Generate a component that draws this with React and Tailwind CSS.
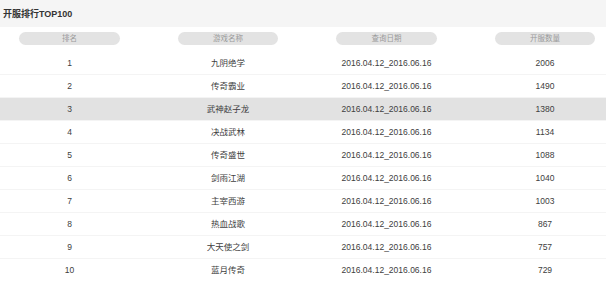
import React from "react";

const rows = [
  ["1", "九阴绝学", "2006"],
  ["2", "传奇霸业", "1490"],
  ["3", "武神赵子龙", "1380"],
  ["4", "决战武林", "1134"],
  ["5", "传奇盛世", "1088"],
  ["6", "剑雨江湖", "1040"],
  ["7", "主宰西游", "1003"],
  ["8", "热血战歌", "867"],
  ["9", "大天使之剑", "757"],
  ["10", "蓝月传奇", "729"],
];

const font = { fontFamily: '"Liberation Sans", "Noto Sans CJK SC", sans-serif' };

export default function App() {
  return (
    <div className="w-[606px] h-[281px] bg-white overflow-hidden" style={font}>
      <div className="h-[27px] bg-[#f5f5f5] flex items-center pl-[3px] pt-[2px]">
        <span className="text-[9px] font-bold text-[#333] leading-none">开服排行TOP100</span>
      </div>
      <div className="pt-[5px] pl-[19px] grid grid-cols-[101px_100px_101px_100px] gap-x-[58px]">
        {["排名", "游戏名称", "查询日期", "开服数量"].map((h) => (
          <div key={h} className="h-[13px] rounded-full bg-[#e3e3e3] flex items-center justify-center text-[7.5px] text-[#9a9a9a] leading-none">
            {h}
          </div>
        ))}
      </div>
      <div className="mt-[7px]">
        {rows.map((r, i) => (
          <div
            key={r[0]}
            className={`h-[23px] border-b border-[#f4f4f4] pl-[19px] grid grid-cols-[101px_100px_101px_100px] gap-x-[58px] items-center text-[8.5px] text-[#404040] leading-none ${i === 2 ? "bg-[#e2e2e2]" : ""}`}
          >
            <div className="text-center">{r[0]}</div>
            <div className="text-center">{r[1]}</div>
            <div className="text-center">2016.04.12_2016.06.16</div>
            <div className="text-center">{r[2]}</div>
          </div>
        ))}
      </div>
    </div>
  );
}
